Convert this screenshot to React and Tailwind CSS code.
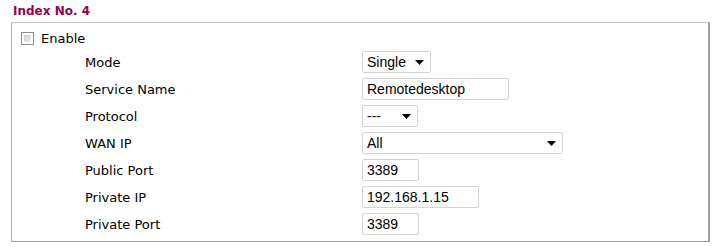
import React from "react";

const Arrow = () => (
  <svg width="9" height="5" viewBox="0 0 9 5" className="shrink-0">
    <polygon points="0,0 9,0 4.5,5" fill="#000" />
  </svg>
);

const Select = ({ value, w }) => (
  <div
    className={`flex items-center justify-between h-[22px] border border-[#d0d3d8] rounded-[2px] bg-white pl-[4px] pr-[6px] text-[14px] text-black ${w}`}
    style={{ fontFamily: '"Liberation Sans", Arial, sans-serif' }}
  >
    <span>{value}</span>
    <Arrow />
  </div>
);

const Input = ({ value, w }) => (
  <div
    className={`flex items-center h-[22px] border border-[#d0d3d8] rounded-[2px] bg-white pl-[4px] text-[14px] text-black ${w}`}
    style={{ fontFamily: '"Liberation Sans", Arial, sans-serif' }}
  >
    <span>{value}</span>
  </div>
);

const rows = [
  ["Mode", <Select value="Single" w="w-[69px]" />],
  ["Service Name", <Input value="Remotedesktop" w="w-[147px]" />],
  ["Protocol", <Select value="---" w="w-[56px]" />],
  ["WAN IP", <Select value="All" w="w-[201px]" />],
  ["Public Port", <Input value="3389" w="w-[57px]" />],
  ["Private IP", <Input value="192.168.1.15" w="w-[117px]" />],
  ["Private Port", <Input value="3389" w="w-[57px]" />],
];

export default function App() {
  return (
    <div
      className="w-[719px] h-[247px] bg-white pt-[3px]"
      style={{ fontFamily: '"DejaVu Sans", Verdana, sans-serif' }}
    >
      <div className="pl-[13px] text-[12px] font-bold text-[#99004c] leading-[16px]">
        Index No. 4
      </div>
      <div className="ml-[11px] mt-[3px] w-[699px] h-[220px] border border-[#a8a8a8] border-t-[#c8c8c8] border-l-[#b0b0b0] border-r-2 border-r-[#a0a0a0] pt-[9px]">
        <div className="flex items-center h-[13px] pl-[9px]">
          <div className="w-[13px] h-[13px] border border-[#8f8f8f] bg-white p-[2px]">
            <div className="w-full h-full bg-gradient-to-br from-[#cfcfcf] to-[#f0f0f0]" />
          </div>
          <span className="ml-[7px] text-[13px] text-black">Enable</span>
        </div>
        <div className="mt-[6px] flex flex-col gap-[5px]">
          {rows.map(([label, ctrl]) => (
            <div key={label} className="flex items-center h-[22px]">
              <div className="pl-[73px] w-[350px] text-[13px] text-black pt-[2px]">{label}</div>
              {ctrl}
            </div>
          ))}
        </div>
      </div>
    </div>
  );
}
